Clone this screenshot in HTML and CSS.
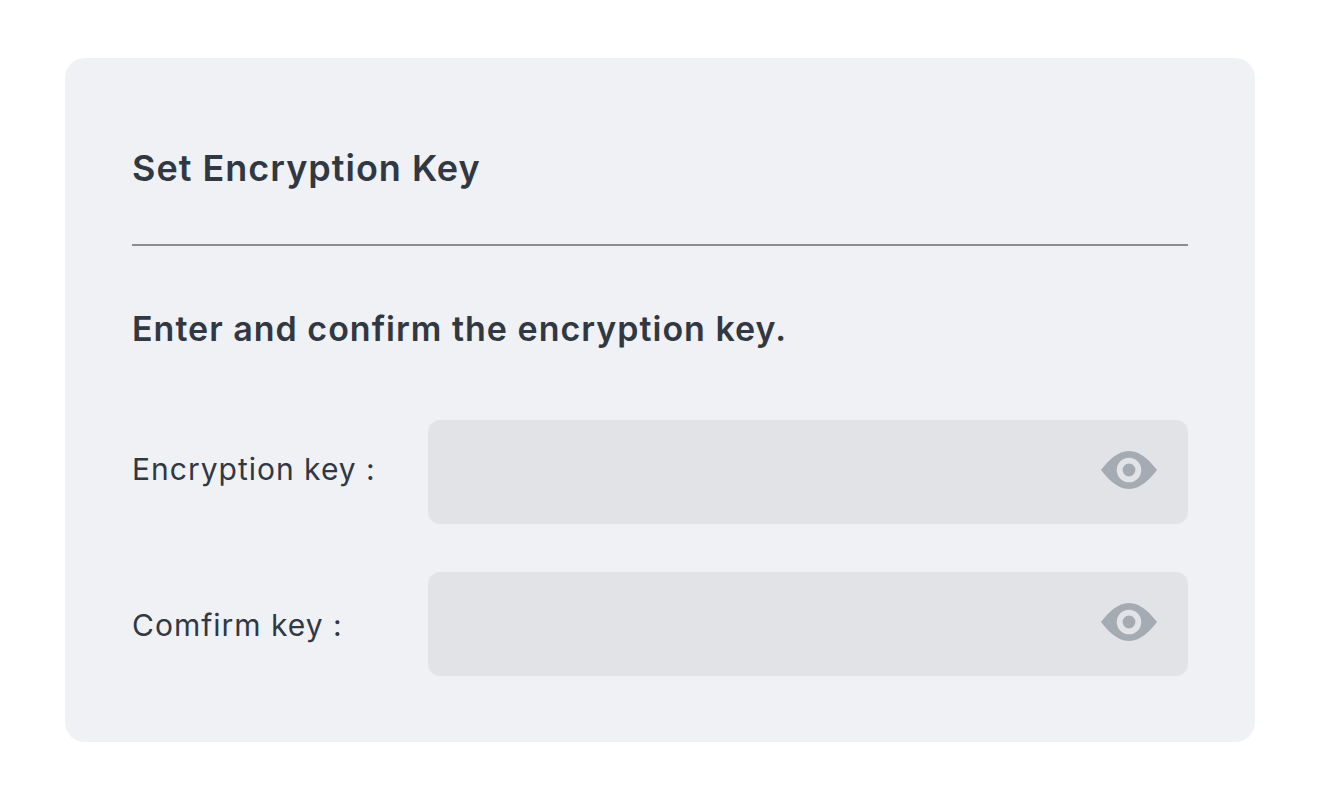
FILE: index.html
```html
<!DOCTYPE html>
<html lang="en">
<head>
<meta charset="utf-8">
<meta name="viewport" content="width=device-width, initial-scale=1">
<title>Set Encryption Key</title>
<link rel="stylesheet" href="styles.css">
</head>
<body>
<main class="card">
  <h1 class="title">Set Encryption Key</h1>
  <form class="form">
    <p class="prompt">Enter and confirm the encryption key.</p>
    <div class="row">
      <label class="label" for="key">Encryption key :</label>
      <div class="field">
        <input class="input" id="key" type="password">
        <button class="toggle" type="button" aria-label="Show encryption key">
          <svg class="eye" viewBox="0 0 56 38" aria-hidden="true"><path fill-rule="evenodd" d="M0 19C6 11 16 0 28 0s22 11 28 19c-6 8-16 19-28 19S6 27 0 19ZM28 6.700a12.300 12.300 0 1 0 0 24.600a12.300 12.300 0 1 0 0-24.600Z"/><circle cx="28" cy="19" r="6.400"/></svg>
        </button>
      </div>
    </div>
    <div class="row">
      <label class="label label-confirm" for="confirm">Comfirm key :</label>
      <div class="field">
        <input class="input" id="confirm" type="password">
        <button class="toggle" type="button" aria-label="Show confirmed key">
          <svg class="eye" viewBox="0 0 56 38" aria-hidden="true"><path fill-rule="evenodd" d="M0 19C6 11 16 0 28 0s22 11 28 19c-6 8-16 19-28 19S6 27 0 19ZM28 6.700a12.300 12.300 0 1 0 0 24.600a12.300 12.300 0 1 0 0-24.600Z"/><circle cx="28" cy="19" r="6.400"/></svg>
        </button>
      </div>
    </div>
  </form>
</main>
</body>
</html>
```
FILE: styles.css
```css
* { box-sizing: border-box; }
body {
  margin: 0;
  padding: 58px 65px;
  background: #fff;
  color: #2f3843;
  font-family: Inter, "Liberation Sans", sans-serif;
}
.card {
  padding: 86px 67px 66px;
  border-radius: 20px;
  background: #f0f1f5;
}
.title {
  margin: 0;
  padding-bottom: 52px;
  border-bottom: 2px solid #8c8d90;
  font-size: 36px;
  line-height: 48px;
  font-weight: 600;
  letter-spacing: 1px;
}
.form {
  display: flex;
  flex-direction: column;
  gap: 48px;
  padding-top: 59px;
}
.prompt {
  margin: 0 0 19px;
  font-size: 34px;
  line-height: 48px;
  font-weight: 600;
  letter-spacing: 1px;
}
.row {
  display: grid;
  grid-template-columns: 296px 1fr;
  align-items: center;
}
.label {
  font-size: 30px;
  line-height: 40px;
  letter-spacing: 1px;
  padding-bottom: 6px;
}
.label-confirm { padding: 2px 0 0; }
.field {
  display: flex;
  align-items: center;
  height: 104px;
  padding: 0 31px 4px 24px;
  border-radius: 12px;
  background: #e2e3e7;
}
.input {
  flex: 1;
  min-width: 0;
  height: 100%;
  border: 0;
  outline: 0;
  background: transparent;
  color: inherit;
  font: inherit;
  font-size: 30px;
}
.toggle {
  padding: 0;
  border: 0;
  background: transparent;
  cursor: pointer;
}
.eye {
  display: block;
  width: 56px;
  height: 38px;
  fill: #a5abb3;
}
```
